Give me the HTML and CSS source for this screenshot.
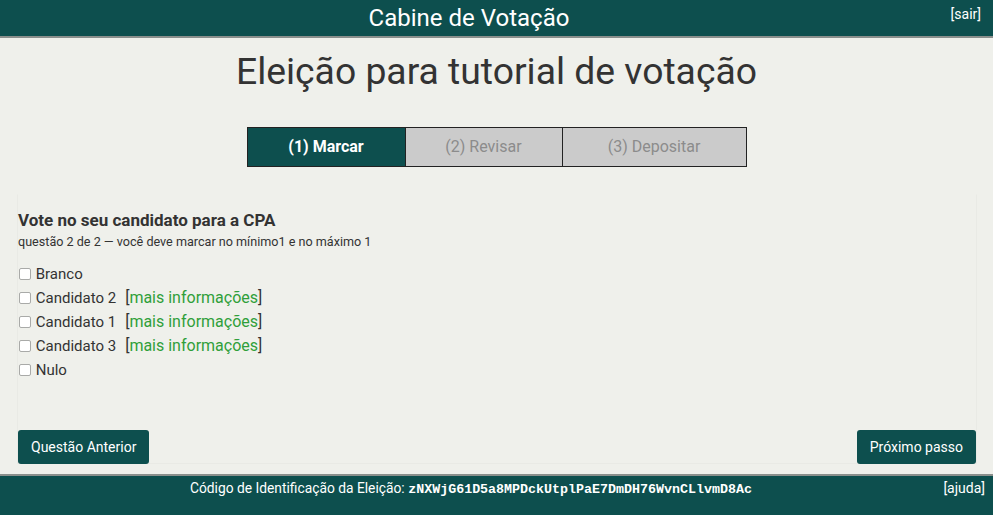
FILE: index.html
```html
<!DOCTYPE html>
<html lang="pt">
<head>
<meta charset="utf-8">
<title>Cabine de Votação</title>
<link rel="stylesheet" href="styles.css">
</head>
<body>
<header class="topbar">
  <div class="topbar-title">Cabine de Votação</div>
  <a class="topbar-link" href="#">[sair]</a>
</header>
<main class="main">
  <h1 class="election-title">Eleição para tutorial de votação</h1>
  <div class="steps">
    <div class="step step-active">(1) Marcar</div>
    <div class="step step-2">(2) Revisar</div>
    <div class="step step-3">(3) Depositar</div>
  </div>
  <section class="panel">
    <h2 class="question">Vote no seu candidato para a CPA</h2>
    <div class="question-info">questão 2 de 2 — você deve marcar no mínimo1 e no máximo 1</div>
    <ul class="options">
      <li><label><input type="checkbox"> Branco</label></li>
      <li><label><input type="checkbox"> Candidato 2</label><span class="more">[<a href="#">mais informações</a>]</span></li>
      <li><label><input type="checkbox"> Candidato 1</label><span class="more">[<a href="#">mais informações</a>]</span></li>
      <li><label><input type="checkbox"> Candidato 3</label><span class="more">[<a href="#">mais informações</a>]</span></li>
      <li><label><input type="checkbox"> Nulo</label></li>
    </ul>
    <div class="nav-buttons">
      <button class="btn">Questão Anterior</button>
      <button class="btn">Próximo passo</button>
    </div>
  </section>
</main>
<footer class="footer">
  <div class="footer-text">Código de Identificação da Eleição: <code class="hash">zNXWjG61D5a8MPDckUtplPaE7DmDH76WvnCLlvmD8Ac</code></div>
  <a class="footer-link" href="#">[ajuda]</a>
</footer>
</body>
</html>
```
FILE: styles.css
```css
* { box-sizing: border-box; }
html, body { margin: 0; padding: 0; }
body {
  font-family: Roboto, "Liberation Sans", sans-serif;
  background: #eff0eb;
  color: #333;
  width: 993px;
  height: 515px;
  overflow: hidden;
  display: flex;
  flex-direction: column;
}
.topbar {
  height: 38px;
  background: #0d4f4e;
  border-bottom: 2px solid #8a8f8c;
  display: flex;
  align-items: flex-start;
}
.topbar-title {
  flex: 1;
  text-align: center;
  color: #fff;
  font-size: 24px;
  line-height: 36px;
}
.topbar-link {
  width: 55px;
  padding: 6px 12px 0 0;
  text-align: right;
  color: #fff;
  font-size: 14px;
  text-decoration: none;
}
.main {
  flex: 1;
  padding: 0 17px;
}
.election-title {
  margin: 12px 0 0;
  text-align: center;
  font-size: 37.3px;
  font-weight: 400;
  line-height: 42px;
  color: #333;
}
.steps {
  margin: 35px auto 0;
  display: flex;
  width: 500px;
  border: 1px solid #222;
}
.step {
  height: 38px;
  line-height: 38px;
  text-align: center;
  font-size: 16px;
  background: #cbcbcb;
  color: #8c8c8c;
}
.step-active {
  width: 158px;
  background: #0d4f4e;
  color: #fff;
  font-weight: 700;
  border-right: 1px solid #222;
}
.step-2 { width: 157px; border-right: 1px solid #222; }
.step-3 { flex: 1; }
.panel {
  margin-top: 27px;
  border: 1px solid #e9eae5;
  border-top-color: transparent;
  height: 270px;
  padding: 15px 0 0 0;
  display: flex;
  flex-direction: column;
  width: 960px;
}
.question {
  margin: 0;
  font-size: 17px;
  font-weight: 700;
  line-height: 20px;
  color: #333;
}
.question-info {
  margin-top: 4px;
  font-size: 12.6px;
  line-height: 16px;
  color: #333;
}
.options {
  list-style: none;
  margin: 12px 0 0;
  padding: 0;
}
.options li {
  font-size: 15px;
  line-height: 24px;
  height: 24px;
}
.options li:first-child {
  padding-top: 1px;
  line-height: 23px;
}
.options input {
  -webkit-appearance: none;
  appearance: none;
  width: 12px;
  height: 12px;
  margin: 0 1px 0 1px;
  vertical-align: -1px;
  border: 1px solid #a9aaa8;
  border-radius: 2px;
  background: #fff;
}
.more {
  color: #333;
  font-size: 16px;
  margin-left: 9px;
}
.more a { color: #2f9f3a; text-decoration: none; }
.nav-buttons {
  margin-top: auto;
  display: flex;
  justify-content: space-between;
  margin-bottom: -1px;
}
.btn {
  font-family: Roboto, "Liberation Sans", sans-serif;
  background: #0d4f4e;
  color: #fff;
  border: none;
  border-radius: 3px;
  font-size: 14px;
  height: 34px;
  padding: 0 13px;
}
.footer {
  height: 41px;
  background: #0d4f4e;
  border-top: 2px solid #8a8f8c;
  color: #fff;
  font-size: 14px;
  display: flex;
  align-items: flex-start;
}
.footer-text {
  flex: 1;
  text-align: center;
  padding-top: 3px;
  line-height: 18px;
  font-size: 13.8px;
}
.hash {
  font-family: "Liberation Mono", monospace;
  font-weight: 700;
  font-size: 13.33px;
}
.footer-link {
  width: 51px;
  padding: 3px 8px 0 0;
  text-align: right;
  color: #fff;
  text-decoration: none;
  line-height: 18px;
}
```
